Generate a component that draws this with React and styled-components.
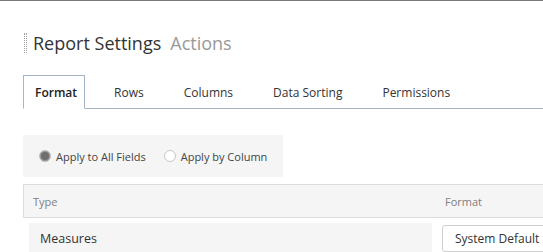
import styled, { createGlobalStyle } from "styled-components";

const GlobalStyle = createGlobalStyle`
  html, body {
    margin: 0;
    padding: 0;
    background: #fff;
    overflow: hidden;
  }
  body {
    font-family: "Open Sans", "Liberation Sans", sans-serif;
    color: #333;
  }
`;

const Page = styled.div`
  width: 660px;
  border-top: 1px solid #7a7a7a;
  padding: 0 0 0 23px;
  box-sizing: border-box;
`;

const Header = styled.div`
  display: flex;
  align-items: center;
  gap: 6px;
  height: 20px;
  margin-top: 32px;
`;

const Grip = styled.span`
  width: 1px;
  height: 20px;
  margin-left: 1px;
  border-left: 1px dotted #a0a0a0;
  border-right: 1px dotted #a0a0a0;
`;

const Title = styled.h1`
  margin: 0;
  font-size: 18px;
  font-weight: 400;
  color: #333;
  line-height: 20px;

  & span {
    color: #999;
    margin-left: 9px;
  }
`;

const Tabs = styled.ul`
  display: flex;
  list-style: none;
  margin: 22px 0 0;
  padding: 0;
  height: 33px;
  border-bottom: 1px solid #a3b5c7;
`;

const Tab = styled.li`
  display: flex;
  align-items: center;
  padding: 0 7px 0 11px;
  margin-right: ${(p) => (p.$active ? "17px" : "20px")};
  font-size: 12px;
  color: ${(p) => (p.$active ? "#222" : "#333")};
  font-weight: ${(p) => (p.$active ? 600 : 400)};
  border: 1px solid ${(p) => (p.$active ? "#a3b5c7" : "transparent")};
  border-bottom: ${(p) => (p.$active ? "1px solid #fff" : "none")};
  margin-bottom: ${(p) => (p.$active ? "-1px" : "0")};
  background: ${(p) => (p.$active ? "#fff" : "transparent")};
`;

const ScopePanel = styled.div`
  display: flex;
  align-items: center;
  gap: 18px;
  width: 260px;
  height: 42px;
  margin-top: 26px;
  padding-left: 16px;
  box-sizing: border-box;
  background: #f5f5f5;
`;

const RadioLabel = styled.label`
  display: flex;
  align-items: center;
  gap: 5px;
  font-size: 11px;
  color: #444;
`;

const RadioDot = styled.span`
  width: 10px;
  height: 10px;
  border-radius: 50%;
  border: 1px solid ${(p) => (p.$checked ? "#c4c4c4" : "#c8c8c8")};
  background: ${(p) => (p.$checked ? "#6e6e6e" : "#fff")};
  box-shadow: ${(p) => (p.$checked ? "inset 0 0 0 1px #999" : "none")};
`;

const Table = styled.div`
  margin-top: 7px;
  border-top: 1px solid #dcdcdc;
  border-left: 1px solid #dcdcdc;
`;

const HeadRow = styled.div`
  display: grid;
  grid-template-columns: 412px 1fr;
  height: 32px;
  align-items: center;
  background: #f5f5f5;
  border-bottom: 1px solid #dcdcdc;
  font-size: 11px;
  color: #808080;
`;

const HeadCell = styled.div`
  padding-left: 9px;
`;

const BodyRow = styled.div`
  display: grid;
  grid-template-columns: 412px 1fr;
  margin-left: -1px;
  padding-top: 5px;
  background: #fff;
`;

const TypeCell = styled.div`
  margin: 0 3px 0 6px;
  height: 30px;
  display: flex;
  align-items: center;
  padding-left: 11px;
  background: #f5f5f5;
  font-size: 12.5px;
  color: #333;
`;

const FormatCell = styled.div`
  padding: 2px 0 0 7px;
`;

const Select = styled.div`
  width: 160px;
  height: 27px;
  display: flex;
  align-items: center;
  padding-left: 12px;
  box-sizing: border-box;
  border: 1px solid #cfcfcf;
  border-radius: 3px;
  font-size: 12px;
  color: #333;
  background: #fff;
`;

const tabs = ["Format", "Rows", "Columns", "Data Sorting", "Permissions"];

export default function App()
{
  return (
    <>
      <GlobalStyle />
      <Page>
        <Header>
          <Grip />
          <Title>
            Report Settings<span>Actions</span>
          </Title>
        </Header>

        <Tabs>
          {tabs.map((tab, i) =>
            <Tab key={tab} $active={i === 0}>{tab}</Tab>
          )}
        </Tabs>

        <ScopePanel>
          <RadioLabel>
            <RadioDot $checked />
            Apply to All Fields
          </RadioLabel>
          <RadioLabel>
            <RadioDot />
            Apply by Column
          </RadioLabel>
        </ScopePanel>

        <Table>
          <HeadRow>
            <HeadCell>Type</HeadCell>
            <HeadCell>Format</HeadCell>
          </HeadRow>
          <BodyRow>
            <TypeCell>Measures</TypeCell>
            <FormatCell>
              <Select>System Default</Select>
            </FormatCell>
          </BodyRow>
        </Table>
      </Page>
    </>
  );
}
